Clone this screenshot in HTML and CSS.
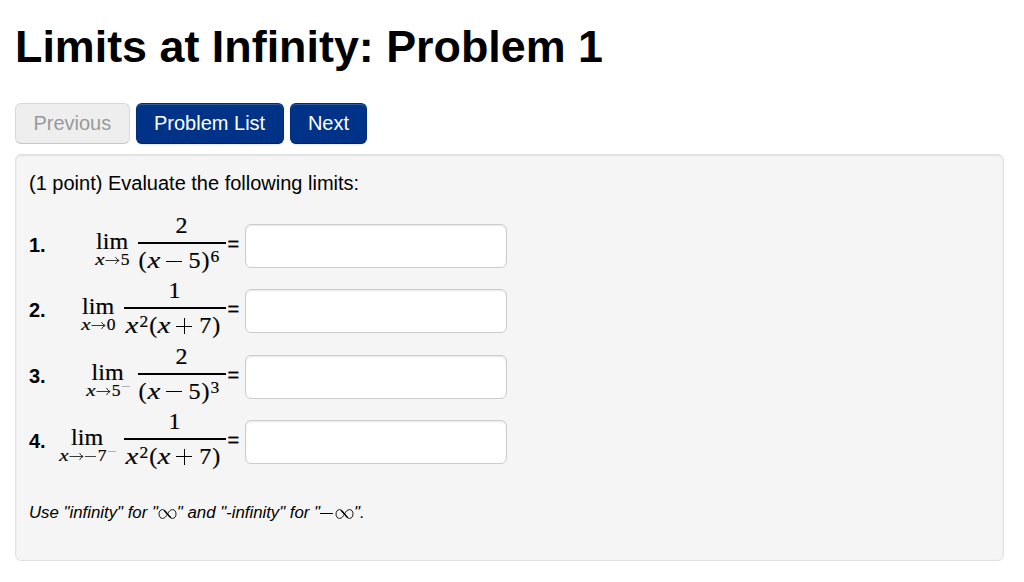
FILE: index.html
```html
<!DOCTYPE html>
<html lang="en">
<head>
    <meta charset="UTF-8">
    <meta name="viewport" content="width=device-width, initial-scale=1.0">
    <title>Limits at Infinity: Problem 1</title>
    <link rel="stylesheet" href="styles.css">
</head>
<body>
    <svg class="defs" aria-hidden="true">
        <symbol id="arrow" viewBox="0 0 15 10">
            <path d="M0.5 5.5H14M10.5 2Q11.5 4.5 14.2 5.5Q11.5 6.5 10.5 9" fill="none" stroke="#222" stroke-width="0.9"/>
        </symbol>
        <symbol id="infinity" viewBox="0 0 19 12">
            <path d="M9.5 6C7.6 3 6.4 1.6 4.6 1.6C2.4 1.6 1 3.4 1 6C1 8.6 2.4 10.4 4.6 10.4C7 10.4 8.1 8.2 9.5 6C10.9 3.6 12.2 1.6 14.6 1.6C16.7 1.6 18 3.4 18 6C18 8.6 16.6 10.4 14.6 10.4C12.6 10.4 11.4 9 9.5 6Z" fill="none" stroke="#000" stroke-width="0.9"/>
            <path d="M6 2.2L12.8 9.8" fill="none" stroke="#000" stroke-width="1.4"/>
        </symbol>
    </svg>

    <h1>Limits at Infinity: Problem 1</h1>

    <div class="nav-buttons">
        <button class="btn" disabled>Previous</button>
        <button class="btn btn-primary">Problem List</button>
        <button class="btn btn-primary">Next</button>
    </div>

    <div class="problem">
        <p class="intro">(1 point) Evaluate the following limits:</p>

        <div class="row">
            <b class="number">1.</b>
            <div class="math">
                <div class="lim">lim<div class="sub"><i>x</i><svg class="arrow"><use href="#arrow"/></svg>5</div></div>
                <div class="frac frac-short">
                    <div class="num">2</div>
                    <div class="den">(<i>x</i><span class="op minus"></span>5<span class="close">)</span><sup>6</sup></div>
                </div>
            </div>
            <span class="equals">=</span>
            <input type="text" aria-label="Answer 1">
        </div>
        <div class="row">
            <b class="number">2.</b>
            <div class="math">
                <div class="lim">lim<div class="sub"><i>x</i><svg class="arrow"><use href="#arrow"/></svg>0</div></div>
                <div class="frac">
                    <div class="num">1</div>
                    <div class="den"><i>x</i><sup>2</sup>(<i>x</i><span class="op plus"></span>7<span class="close">)</span></div>
                </div>
            </div>
            <span class="equals">=</span>
            <input type="text" aria-label="Answer 2">
        </div>
        <div class="row">
            <b class="number">3.</b>
            <div class="math">
                <div class="lim">lim<div class="sub"><i>x</i><svg class="arrow"><use href="#arrow"/></svg>5<span class="side"></span></div></div>
                <div class="frac frac-short">
                    <div class="num">2</div>
                    <div class="den">(<i>x</i><span class="op minus"></span>5<span class="close">)</span><sup>3</sup></div>
                </div>
            </div>
            <span class="equals">=</span>
            <input type="text" aria-label="Answer 3">
        </div>
        <div class="row">
            <b class="number">4.</b>
            <div class="math">
                <div class="lim">lim<div class="sub"><i>x</i><svg class="arrow"><use href="#arrow"/></svg><span class="neg"></span>7<span class="side"></span></div></div>
                <div class="frac">
                    <div class="num">1</div>
                    <div class="den"><i>x</i><sup>2</sup>(<i>x</i><span class="op plus"></span>7<span class="close">)</span></div>
                </div>
            </div>
            <span class="equals">=</span>
            <input type="text" aria-label="Answer 4">
        </div>

        <p class="hint">Use "infinity" for "<svg class="inf"><use href="#infinity"/></svg>" and "-infinity" for "<span class="neg-inf"></span><svg class="inf"><use href="#infinity"/></svg>".</p>
    </div>
</body>
</html>
```
FILE: styles.css
```css
* {
    box-sizing: border-box;
}
body {
    margin: 0;
    padding: 17px 20px 0 15px;
    font-family: "Liberation Sans", Arial, sans-serif;
    font-size: 20px;
    color: #000;
    background: #fff;
}
.defs {
    display: none;
}
h1 {
    margin: 0 0 26px;
    font-size: 44.85px;
    line-height: 60px;
}
.nav-buttons {
    display: flex;
    gap: 6px;
    margin-bottom: 10px;
}
.btn {
    height: 41px;
    padding: 0 17.4px;
    font: inherit;
    color: #999;
    background: #eee;
    border: 1px solid #d8d8d8;
    border-bottom-color: #c8c8c8;
    border-radius: 6px;
}
.btn-primary {
    color: #fff;
    background: #038;
    border-color: #002e7a #002e7a #00205a;
    box-shadow: inset 0 1px 0 rgba(255,255,255,.2), 0 1px 2px rgba(0,0,0,.1);
}
.problem {
    width: 989px;
    height: 407px;
    padding: 16px 13px 0;
    background: #f5f5f5;
    border: 1px solid #e1e1e1;
    border-radius: 6px;
    box-shadow: inset 0 1px 2px rgba(0,0,0,.08);
}
.intro {
    margin: 0 0 18px;
    line-height: 24px;
}
.row {
    display: flex;
    align-items: flex-start;
    height: 65.3px;
}
.number {
    width: 26px;
    margin-top: 20px;
    line-height: 24px;
}
.math {
    display: flex;
    justify-content: flex-end;
    width: 170.5px;
    font: 24px/24px "Liberation Serif", "Times New Roman", serif;
    -webkit-text-stroke: 0.2px #000;
}
.math i {
    display: inline-block;
    width: 14px;
    text-align: center;
    transform: scaleX(1.2);
}
.lim {
    margin: 16px 8px 0 0;
    text-align: center;
}
.sub {
    display: flex;
    justify-content: center;
    margin-top: -2px;
    font-size: 17.5px;
    line-height: 16px;
}
.sub i {
    width: 10px;
}
.arrow {
    width: 15px;
    height: 10px;
    margin: 4px 1px 0 0;
}
.neg, .side {
    height: 1px;
    background: #444;
}
.neg {
    width: 11px;
    margin: 9px 2px 0 0;
}
.side {
    width: 8px;
    margin: 4px 0 0 1px;
    background: #b0b0b0;
}
.frac {
    width: 102px;
    text-align: center;
}
.frac-short {
    width: 88px;
}
.num {
    box-sizing: content-box;
    height: 24px;
    padding-bottom: 5px;
    border-bottom: 2px solid #000;
}
.den {
    display: flex;
    margin-top: 4px;
    padding-left: 1px;
}
.den sup {
    margin: 0 1px;
    font-size: 17.5px;
    line-height: 17px;
}
.close {
    margin-left: 1px;
}
.op {
    width: 16px;
    height: 16px;
    margin: 5px 7px 0 5px;
    background: linear-gradient(#000, #000) center / 16px 1px no-repeat;
}
.plus {
    background: linear-gradient(#000, #000) center / 16px 1px no-repeat, linear-gradient(#000, #000) center / 1px 16px no-repeat;
}
.equals {
    width: 19.5px;
    margin-top: 19px;
    padding-left: 2px;
    line-height: 24px;
    -webkit-text-stroke: 0.3px #000;
}
input {
    width: 262px;
    height: 44px;
    margin-top: 11px;
    padding: 5px 8px;
    font: inherit;
    background: #fff;
    border: 1px solid #ccc;
    border-radius: 6px;
    box-shadow: inset 0 1px 2px rgba(0,0,0,.1);
}
.hint {
    margin: 27px 0 0;
    font-size: 16.8px;
    line-height: 24px;
    font-style: italic;
}
.inf {
    width: 19px;
    height: 12px;
    vertical-align: -2px;
}
.neg-inf {
    display: inline-block;
    width: 13px;
    height: 1px;
    margin-right: 2px;
    background: #000;
    vertical-align: 4px;
}
```
